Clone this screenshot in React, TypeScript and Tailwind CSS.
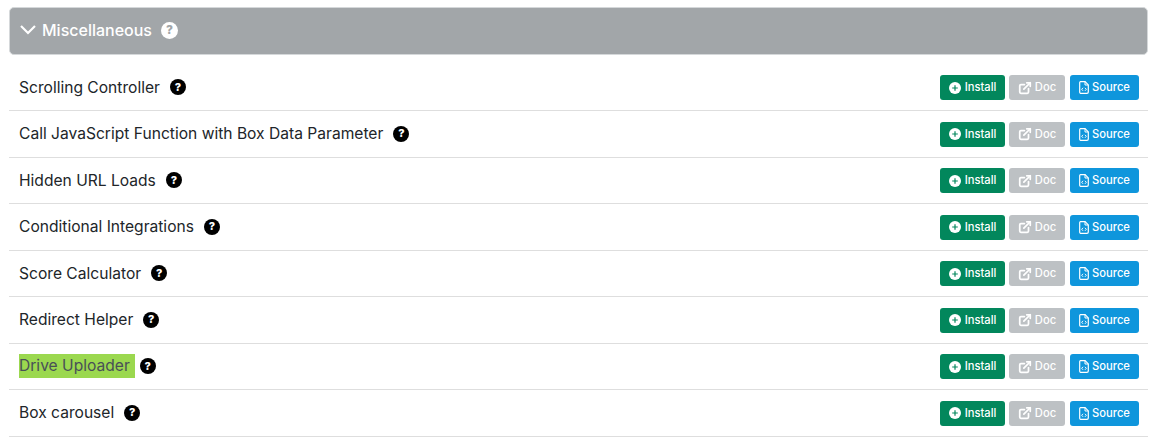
import { ExternalLink } from "lucide-react";

const rows = [
  { name: "Scrolling Controller" },
  { name: "Call JavaScript Function with Box Data Parameter" },
  { name: "Hidden URL Loads" },
  { name: "Conditional Integrations" },
  { name: "Score Calculator" },
  { name: "Redirect Helper" },
  { name: "Drive Uploader", highlight: true },
  { name: "Box carousel" },
];

const HelpIcon = ({ light }: { light?: boolean }) => (
  <span
    className={`flex items-center justify-center rounded-full font-extrabold ${
      light
        ? "w-[17px] h-[17px] bg-white text-[#a2a6a9] text-[12px]"
        : "w-4 h-4 bg-black text-white text-[11px]"
    }`}
  >
    ?
  </span>
);

const InstallIcon = () => (
  <svg width="12" height="12" viewBox="0 0 12 12">
    <circle cx="6" cy="6" r="6" fill="#fff" />
    <path d="M6 3.2v5.6M3.2 6h5.6" stroke="#02875c" strokeWidth="1.2" />
  </svg>
);

const SourceIcon = () => (
  <svg width="10" height="13" viewBox="0 0 10 13" fill="none" stroke="#fff">
    <path d="M1.5.7h4.6l3.2 3.2v7a1.4 1.4 0 0 1-1.4 1.4H1.5A1 1 0 0 1 .7 11.300V1.500a1 1 0 0 1 .8-.8z" strokeWidth="1.2" />
    <path d="M6 .7v3.300h3.300" strokeWidth="1" />
    <path d="M4 6.800 2.700 8.300 4 9.800M6 6.800l1.300 1.500L6 9.800" strokeWidth="1" />
  </svg>
);

const App = () => {
  return (
    <div className="w-[1152px] h-[440px] overflow-hidden bg-white pl-[9px] pr-[4px] pt-[7px] font-['Inter',sans-serif]">
      <div className="h-[48px] flex items-center gap-[9px] pl-[10px] pb-[2px] rounded-[5px] border border-[#d5d8da] bg-[#a2a6a9] text-white">
        <div className="flex items-center gap-[6px]">
          <svg width="16" height="10" viewBox="0 0 16 10" fill="none" stroke="#fff" strokeWidth="2.200">
            <path d="M1 1l7 7 7-7" />
          </svg>
          <span className="text-[16px] font-medium">Miscellaneous</span>
        </div>
        <HelpIcon light />
      </div>

      <div className="mt-[9.5px]">
        {rows.map(({ name, highlight }) => (
          <div
            key={name}
            className="h-[46.5px] flex items-center justify-between pl-[10px] pr-[9px] border-b border-[#dedede]"
          >
            <div className="flex items-center gap-[5px] text-[15.600px] text-[#212529]">
              <span className={highlight ? "bg-[#9bd84f] text-[#495057] h-6 leading-6 pr-[5px]" : "pr-[5px]"}>{name}</span>
              <HelpIcon />
            </div>
            <div className="flex items-center mt-px text-[11.200px] font-medium text-white">
              <span className="w-[65px] h-[25px] mr-[4px] flex items-center justify-center gap-[4px] rounded-[3px] bg-[#02875c]">
                <InstallIcon />
                Install
              </span>
              <span className="w-[56px] h-[25px] mr-[5px] flex items-center justify-center gap-[3px] rounded-[3px] bg-[#bdc1c4]">
                <ExternalLink className="w-3.5 h-3.5" strokeWidth={3} />
                Doc
              </span>
              <span className="w-[69px] h-[25px] flex items-center justify-center gap-[3px] rounded-[3px] bg-[#0f96dc]">
                <SourceIcon />
                Source
              </span>
            </div>
          </div>
        ))}
      </div>
    </div>
  );
};

export default App;
